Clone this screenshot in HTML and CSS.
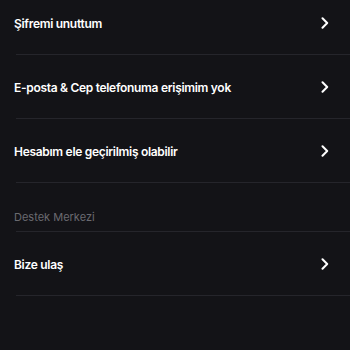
FILE: index.html
```html
<!DOCTYPE html>
<html lang="tr">
<head>
<meta charset="utf-8">
<link rel="stylesheet" href="styles.css">
</head>
<body>
<div class="list">
  <div class="row"><span class="label">Şifremi unuttum</span><svg class="chev" width="8" height="12" viewBox="0 0 8 12"><path d="M1.5 1.2 L6.2 6 L1.5 10.8" fill="none" stroke="#fff" stroke-width="2" stroke-linecap="round" stroke-linejoin="round"/></svg></div>
  <div class="row"><span class="label">E-posta &amp; Cep telefonuma erişimim yok</span><svg class="chev" width="8" height="12" viewBox="0 0 8 12"><path d="M1.5 1.2 L6.2 6 L1.5 10.8" fill="none" stroke="#fff" stroke-width="2" stroke-linecap="round" stroke-linejoin="round"/></svg></div>
  <div class="row"><span class="label">Hesabım ele geçirilmiş olabilir</span><svg class="chev" width="8" height="12" viewBox="0 0 8 12"><path d="M1.5 1.2 L6.2 6 L1.5 10.8" fill="none" stroke="#fff" stroke-width="2" stroke-linecap="round" stroke-linejoin="round"/></svg></div>
  <div class="section">Destek Merkezi</div>
  <div class="row"><span class="label">Bize ulaş</span><svg class="chev" width="8" height="12" viewBox="0 0 8 12"><path d="M1.5 1.2 L6.2 6 L1.5 10.8" fill="none" stroke="#fff" stroke-width="2" stroke-linecap="round" stroke-linejoin="round"/></svg></div>
</div>
</body>
</html>
```
FILE: styles.css
```css
html, body {
  margin: 0;
  padding: 0;
  background: #131317;
  height: 100%;
  overflow: hidden;
}
body {
  font-family: Inter, "Noto Sans", sans-serif;
  color: #ffffff;
}
.list {
  margin-top: -9px;
}
.row,
.section {
  box-sizing: border-box;
  display: flex;
  padding: 0 21px 0 14px;
  background: linear-gradient(#25252b, #25252b) no-repeat right bottom / calc(100% - 16px) 1px;
}
.row {
  height: 64px;
  align-items: center;
  justify-content: space-between;
}
.label {
  font-size: 12px;
  font-weight: 600;
  letter-spacing: -0.3px;
}
.chev {
  display: block;
}
.section {
  height: 49px;
  align-items: flex-end;
  padding-bottom: 8px;
  font-size: 11px;
  color: #6a6a70;
}
```
